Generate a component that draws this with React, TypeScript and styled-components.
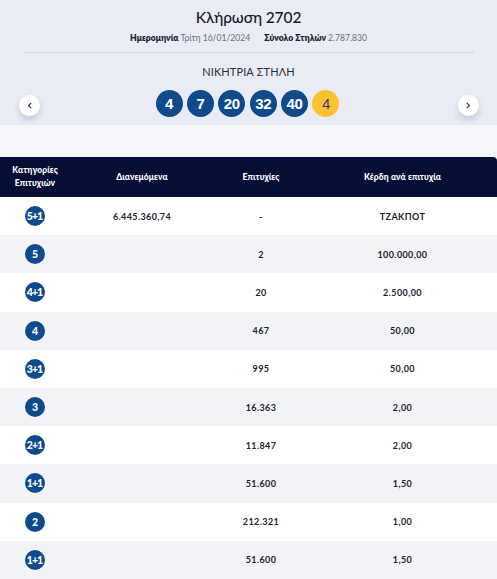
import React from "react";
import styled, { createGlobalStyle } from "styled-components";

const Global = createGlobalStyle`
  html, body { margin: 0; padding: 0; background: #ffffff; }
  body { font-family: Lato, "Noto Sans", sans-serif; }
  * { box-sizing: border-box; }
`;

const Page = styled.div`
  width: 497px;
  background: #ffffff;
`;

const Hero = styled.section`
  background: #e9ecf4;
  padding: 7px 0 8px;
  display: flex;
  flex-direction: column;
  align-items: center;
`;

const Title = styled.h1`
  margin: 0;
  font-size: 15.5px;
  line-height: 20px;
  font-weight: 500;
  color: #15172a;
  letter-spacing: -0.1px;
`;

const Meta = styled.div`
  margin-top: 4px;
  display: flex;
  gap: 14px;
  font-size: 8.6px;
  line-height: 14px;
  color: #6b6e78;
`;

const MetaItem = styled.span`
  b {
    font-weight: 800;
    color: #1d2030;
    margin-right: 2px;
  }
`;

const Divider = styled.hr`
  margin: 7px 0 0;
  width: 450px;
  border: 0;
  border-top: 1px solid #d2d5de;
`;

const Label = styled.div`
  margin-top: 12px;
  font-size: 11px;
  line-height: 14px;
  color: #2a2c38;
  letter-spacing: 0.1px;
`;

const NavRow = styled.div`
  margin-top: 11px;
  width: 100%;
  padding: 0 18px 0 19px;
  display: flex;
  align-items: center;
  justify-content: space-between;
`;

const Arrow = styled.button`
  width: 21px;
  height: 21px;
  margin-top: 3px;
  border-radius: 50%;
  border: 0;
  padding: 0;
  background: #ffffff;
  box-shadow: 0 4px 7px rgba(40, 50, 80, 0.18);
  display: flex;
  align-items: center;
  justify-content: center;
`;

const Balls = styled.div`
  display: flex;
  gap: 4.4px;
  margin-right: 3px;
`;

const Ball = styled.div<{ $bonus?: boolean }>`
  width: 27px;
  height: 27px;
  border-radius: 50%;
  background: ${(p) => (p.$bonus ? "#fcc22d" : "#0f4a8c")};
  color: ${(p) => (p.$bonus ? "#1f3f8a" : "#ffffff")};
  font-family: "Liberation Sans", Arial, sans-serif;
  font-weight: ${(p) => (p.$bonus ? 400 : 700)};
  font-size: 15px;
  letter-spacing: -0.3px;
  display: flex;
  align-items: center;
  justify-content: center;
`;

const Strip = styled.div`
  height: 32px;
  background: #f5f6f9;
`;

const cols = "70px 144px 94px 1fr";

const HeadRow = styled.div`
  display: grid;
  grid-template-columns: ${cols};
  height: 40px;
  background: #050f36;
  border-top-right-radius: 4px;
  align-items: center;
`;

const HeadCell = styled.div`
  color: #ffffff;
  font-size: 8.5px;
  line-height: 13px;
  font-weight: 900;
  text-align: center;
  letter-spacing: 0.1px;
`;

const Row = styled.div<{ $alt: boolean }>`
  display: grid;
  grid-template-columns: ${cols};
  height: 38.2px;
  align-items: center;
  background: ${(p) => (p.$alt ? "#f2f3f6" : "#ffffff")};
`;

const Cell = styled.div`
  text-align: center;
  font-size: 9px;
  font-weight: 700;
  color: #1e2030;
  letter-spacing: 0.4px;
  display: flex;
  justify-content: center;
`;

const Cat = styled.div`
  width: 20px;
  height: 20px;
  border-radius: 50%;
  background: #0f4a8c;
  color: #ffffff;
  font-size: 10.5px;
  font-weight: 900;
  letter-spacing: -0.9px;
  display: flex;
  align-items: center;
  justify-content: center;
  padding-right: 1px;
`;

const Chevron = ({ dir }: { dir: "left" | "right" }) => (
  <svg width="6" height="7" viewBox="0 0 6 7">
    <path
      d={dir === "left" ? "M4.2 0.8 L1.6 3.5 L4.2 6.2" : "M1.8 0.8 L4.4 3.5 L1.8 6.2"}
      fill="none"
      stroke="#3a3040"
      strokeWidth="1.2"
    />
  </svg>
);

const rows: [string, string, string, string][] = [
  ["5+1", "6.445.360,74", "-", "ΤΖΑΚΠΟΤ"],
  ["5", "", "2", "100.000,00"],
  ["4+1", "", "20", "2.500,00"],
  ["4", "", "467", "50,00"],
  ["3+1", "", "995", "50,00"],
  ["3", "", "16.363", "2,00"],
  ["2+1", "", "11.847", "2,00"],
  ["1+1", "", "51.600", "1,50"],
  ["2", "", "212.321", "1,00"],
  ["1+1", "", "51.600", "1,50"],
];

export default function App() {
  return (
    <Page>
      <Global />
      <Hero>
        <Title>Κλήρωση 2702</Title>
        <Meta>
          <MetaItem>
            <b>Ημερομηνία</b>Τρίτη 16/01/2024
          </MetaItem>
          <MetaItem>
            <b>Σύνολο Στηλών</b>2.787.830
          </MetaItem>
        </Meta>
        <Divider />
        <Label>ΝΙΚΗΤΡΙΑ ΣΤΗΛΗ</Label>
        <NavRow>
          <Arrow aria-label="previous">
            <Chevron dir="left" />
          </Arrow>
          <Balls>
            {["4", "7", "20", "32", "40"].map((n, i) => (
              <Ball key={i}>{n}</Ball>
            ))}
            <Ball $bonus>4</Ball>
          </Balls>
          <Arrow aria-label="next">
            <Chevron dir="right" />
          </Arrow>
        </NavRow>
      </Hero>
      <Strip />
      <HeadRow>
        <HeadCell>
          Κατηγορίες
          <br />
          Επιτυχιών
        </HeadCell>
        <HeadCell>Διανεμόμενα</HeadCell>
        <HeadCell>Επιτυχίες</HeadCell>
        <HeadCell>Κέρδη ανά επιτυχία</HeadCell>
      </HeadRow>
      {rows.map((r, i) => (
        <Row key={i} $alt={i % 2 === 1}>
          <Cell>
            <Cat>{r[0]}</Cat>
          </Cell>
          <Cell>{r[1]}</Cell>
          <Cell>{r[2]}</Cell>
          <Cell>{r[3]}</Cell>
        </Row>
      ))}
    </Page>
  );
}
